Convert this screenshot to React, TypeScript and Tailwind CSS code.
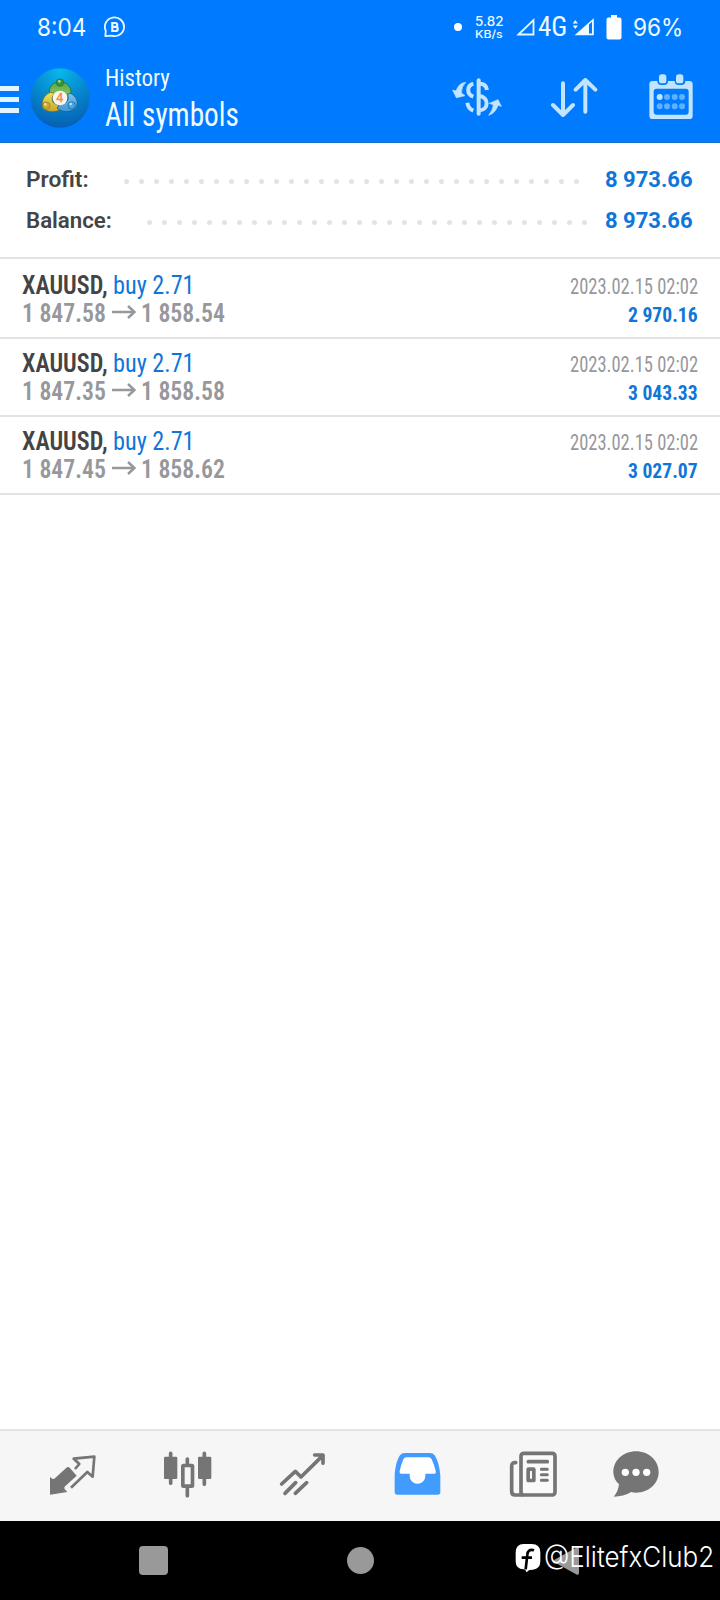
import { useLayoutEffect, useRef, useState } from "react";
import type { ReactNode } from "react";

const condensed = "font-['Roboto_Condensed','Roboto',sans-serif] font-stretch-condensed";
const status = "font-['Inter','Roboto',sans-serif]";

const deals = [
  { open: "1 847.58", close: "1 858.54", profit: "2 970.16" },
  { open: "1 847.35", close: "1 858.58", profit: "3 043.33" },
  { open: "1 847.45", close: "1 858.62", profit: "3 027.07" },
];

// One line of text squeezed horizontally to the given width
function Fit(props: { width: number; className?: string; children: ReactNode }) {
  const ref = useRef<HTMLSpanElement>(null);
  const [scale, setScale] = useState(1);

  useLayoutEffect(() => {
    if (ref.current) setScale(props.width / ref.current.offsetWidth);
  }, [props.width]);

  return (
    <span className={`block shrink-0 ${props.className ?? ""}`} style={{ width: props.width }}>
      <span
        ref={ref}
        className="inline-block origin-left whitespace-nowrap align-top"
        style={{ transform: `scaleX(${scale})` }}
      >
        {props.children}
      </span>
    </span>
  );
}

function BusinessIcon() {
  return (
    <svg viewBox="0 0 22 22" fill="none" className="ml-[18px] h-[22px] w-[22px] shrink-0">
      <path stroke="#e8f6ff" strokeWidth="1.8" strokeLinejoin="round" d="M1.300 20.200 1.800 14.800A9.600 9.400 0 1 1 7.500 19.700Z" />
      <path stroke="#e8f6ff" strokeWidth="2.2" d="M8.3 7h3a1.9 1.9 0 0 1 0 3.9h-3zM8.3 10.9h3.4a2 2 0 0 1 0 4.1H8.3z" />
    </svg>
  );
}

function StatusBar() {
  return (
    <div className={`flex h-[54px] items-center text-[#eefaff] ${status}`}>
      <Fit width={49} className="ml-[37px] pt-px text-[24px] leading-[54px]">8:04</Fit>
      <BusinessIcon />
      <span className="ml-[328px] h-2 w-2 shrink-0 rounded-full bg-white" />
      <div className="ml-[13px] w-[28px] shrink-0 pt-px text-[12.5px] font-medium leading-[12px]">
        <Fit width={28}>5.82</Fit>
        <Fit width={28} className="text-[11px]">KB/s</Fit>
      </div>
      <svg viewBox="0 0 20 20" className="ml-[13px] h-5 w-5 shrink-0">
        <path d="M2.5 17.5 17.5 3v14.5Z" fill="none" stroke="#e8f6ff" strokeWidth="1.8" />
      </svg>
      <Fit width={29} className={`ml-[2px] text-[27px] leading-[54px] ${condensed}`}>4G</Fit>
      <svg viewBox="0 0 23 20" className="ml-[5px] h-5 w-[23px] shrink-0">
        <path d="m3.3 3 2.6 3.6H.7ZM3.3 12 .7 8.4h5.2Z" fill="#eefaff" />
        <path d="M2.5 18.3 21.8 1.3v17Z" fill="#eefaff" />
        <path d="M17 7.5 20 4.8v11.8h-3Z" fill="#007aff" />
      </svg>
      <svg viewBox="0 0 16 25" className="ml-[11px] h-[25px] w-4 shrink-0">
        <path d="M5 0h6v2.5h2.5a2 2 0 0 1 2 2v18a2 2 0 0 1-2 2h-11a2 2 0 0 1-2-2v-18a2 2 0 0 1 2-2H5Z" fill="#fff" />
      </svg>
      <Fit width={50} className="ml-[11px] pt-px text-[24px] leading-[54px]">96%</Fit>
    </div>
  );
}

function Avatar() {
  return (
    <svg viewBox="0 0 180 180" className="ml-[11px] mt-[14px] h-[60px] w-[60px] shrink-0">
      <defs>
        <radialGradient id="disc" cx="50%" cy="5%" r="95%">
          <stop offset="0" stopColor="#08b8ea" />
          <stop offset="0.55" stopColor="#0684cb" />
          <stop offset="1" stopColor="#0560b4" />
        </radialGradient>
        <linearGradient id="green" x1="0" y1="0" x2="0" y2="1">
          <stop offset="0" stopColor="#5aa845" />
          <stop offset="1" stopColor="#8fca6a" />
        </linearGradient>
        <linearGradient id="gold" x1="0" y1="0" x2="0" y2="1">
          <stop offset="0" stopColor="#ece05a" />
          <stop offset="1" stopColor="#c9a52b" />
        </linearGradient>
        <linearGradient id="sky" x1="0" y1="0" x2="0" y2="1">
          <stop offset="0" stopColor="#7cc4ee" />
          <stop offset="1" stopColor="#3c95d6" />
        </linearGradient>
      </defs>
      <circle cx="90" cy="90" r="89" fill="url(#disc)" />
      <path d="M60 82C54 58 66 42 90 42s38 18 31 44l-15 4c-2-18-30-18-32 0Z" fill="url(#green)" stroke="#1f6b3b" strokeWidth="2.500" />
      <path d="M62 73c-20 6-29 28-24 47 14 14 40 14 54 4l-8-15c-20 0-22-20-10-33Z" fill="url(#gold)" stroke="#6a7030" strokeWidth="2.500" />
      <path d="M121 76c18 8 25 26 18 42-16 18-44 16-58 2l10-14c18 4 28-10 22-28Z" fill="url(#sky)" stroke="#176099" strokeWidth="2.500" />
      <circle cx="90" cy="44" r="11" fill="#3c9440" stroke="#1f6b3b" strokeWidth="2" />
      <circle cx="49" cy="113" r="11" fill="#cda92e" stroke="#857a2a" strokeWidth="2" />
      <circle cx="125" cy="112" r="11" fill="#4ba5e2" stroke="#176099" strokeWidth="2" />
      <circle cx="88" cy="40" r="4" fill="#a5dc8c" />
      <circle cx="46" cy="109" r="4" fill="#f4e68a" />
      <circle cx="122" cy="108" r="4" fill="#b8e4fa" />
      <circle cx="90" cy="90" r="22" fill="#fbf4ee" />
      <text x="89" y="103" textAnchor="middle" fontSize="37" fill="#f08a45" stroke="#f08a45" className="font-['Roboto',sans-serif]">4</text>
    </svg>
  );
}

function CurrencyIcon() {
  return (
    <svg viewBox="0 0 150 120" fill="none" className="mt-[23px] h-[40px] w-[50px] shrink-0">
      <path d="M2 39 12 42Q20 18 41 16 28 30 28 48L39 56 13 62Z" fill="#c2e4ff" stroke="#c2e4ff" strokeWidth="2" strokeLinejoin="round" />
      <path d="M148 88 138 85Q131 108 110 115 123 98 124 83L112 79 138 68Z" fill="#c2e4ff" stroke="#c2e4ff" strokeWidth="2" strokeLinejoin="round" />
      <g stroke="#c2e4ff" strokeWidth="12">
        <path d="M80 10v100" strokeLinecap="round" />
        <path d="M64 20C44 26 43 52 64 59M46 77c2 14 8 20 18 24" />
        <path d="M84 20c12 0 19 6 21 19M84 57c27 5 26 40 0 43" />
      </g>
    </svg>
  );
}

function SortIcon() {
  return (
    <svg viewBox="0 0 144 120" fill="none" className="ml-[48px] mt-[23px] h-[40px] w-[48px] shrink-0">
      <g stroke="#c2e4ff" strokeWidth="12" strokeLinecap="round" strokeLinejoin="round">
        <path d="M39 19v95M9 84l30 30 30-30" />
        <path d="M106 104V9M77 38l29-29 30 29" />
      </g>
    </svg>
  );
}

function CalendarIcon() {
  return (
    <svg viewBox="0 0 132 141" className="ml-[51px] mt-[19px] h-[47px] w-[44px] shrink-0">
      <rect x="1" y="24" width="130" height="114" rx="10" fill="#c2e4ff" />
      <rect x="14" y="47" width="105" height="78" rx="9" fill="#007aff" />
      <rect x="25" y="0" width="32" height="36" rx="12" fill="#007aff" />
      <rect x="77" y="0" width="32" height="36" rx="12" fill="#007aff" />
      <rect x="30" y="4" width="22" height="27" rx="8" fill="#c2e4ff" />
      <rect x="81" y="4" width="22" height="27" rx="8" fill="#c2e4ff" />
      {[32, 54, 77, 99].map((x) => (
        <g key={x}>
          <circle cx={x} cy="72" r="9" fill={x === 32 ? "#c2e4ff" : "#5fb1ff"} />
          <circle cx={x} cy="100" r="9" fill="#5fb1ff" />
        </g>
      ))}
    </svg>
  );
}

function AppBar() {
  return (
    <div className="flex h-[89px] border-b border-[#1b70c8] text-[#f0fbff]">
      <div className="flex w-[19px] shrink-0 flex-col gap-[6px] pt-[32px]">
        <span className="h-[5px] bg-[#e2f5ff]" />
        <span className="h-[5px] bg-[#e2f5ff]" />
        <span className="h-[5px] bg-[#e2f5ff]" />
      </div>
      <Avatar />
      <div className={`ml-[15px] w-[347px] pt-[10px] ${condensed}`}>
        <Fit width={65} className="text-[24px] leading-[28px]">History</Fit>
        <Fit width={134} className="mt-[4px] text-[33px] leading-[38px]">All symbols</Fit>
      </div>
      <CurrencyIcon />
      <SortIcon />
      <CalendarIcon />
    </div>
  );
}

function SummaryRow(props: { label: string; labelWidth: number; dots: number; value: string }) {
  return (
    <div className="flex h-[41px] items-center pl-[26px] font-['Roboto',sans-serif] text-[22px] font-semibold leading-[41px]">
      <Fit width={props.labelWidth} className="text-[#444]">{props.label}</Fit>
      <div className="ml-[35px] flex gap-[10px] pt-[3px]">
        {Array.from({ length: props.dots }, (_, i) => (
          <span key={i} className="h-[5px] w-[5px] rounded-full bg-[#e3e3e3]" />
        ))}
      </div>
      <Fit width={88} className="ml-auto mr-[27px] font-bold text-[#0f76d9]">{props.value}</Fit>
    </div>
  );
}

function DealRow(props: { open: string; close: string; profit: string }) {
  return (
    <div className={`flex h-[78px] justify-between border-b-2 border-[#e3e3e3] pl-[22px] pr-[22px] pt-[10px] ${condensed}`}>
      <div className="text-[26px] leading-[28px]">
        <div className="flex">
          <Fit width={86} className="font-semibold text-[#444]">XAUUSD,</Fit>
          <Fit width={82} className="ml-[5px] text-[#0f76d9]">buy 2.71</Fit>
        </div>
        <div className="flex font-semibold text-[#97989b]">
          <Fit width={84}>{props.open}</Fit>
          <svg viewBox="0 0 24 14" fill="none" className="ml-[6px] mt-[6px] h-[14px] w-6 shrink-0">
            <path d="M0 7h23M16 1l6.500 6-6.500 6" stroke="#97989b" strokeWidth="2.500" />
          </svg>
          <Fit width={84} className="ml-[5px]">{props.close}</Fit>
        </div>
      </div>
      <div className="flex flex-col items-end pt-[2px]">
        <Fit width={128} className="text-[22px] leading-[28px] text-[#97989b]">2023.02.15 02:02</Fit>
        <Fit width={70} className="text-[21px] font-bold leading-[28px] text-[#0f76d9]">{props.profit}</Fit>
      </div>
    </div>
  );
}

function TabBar() {
  return (
    <div className="flex h-[92px] border-t-2 border-[#e3e3e3] bg-[#f6f6f6] pl-[48px] pt-5">
      <svg viewBox="0 0 144 144" className="h-12 w-12" fill="none">
        <path d="M6 131V78l8 6 5-1 38-34q4-3 8 1l21 24-37 34 1 7 8 8Z" fill="#757575" />
        <path d="M81 54 94 39 77 23 139 17 134 77 118 63 69 110" stroke="#757575" strokeWidth="8" strokeLinejoin="round" />
      </svg>
      <svg viewBox="0 0 147 144" className="ml-[67px] h-12 w-[49px]" fill="none">
        <path d="M23 7v90M73 24v110M124 7v93" stroke="#757575" strokeWidth="11" strokeLinecap="round" />
        <rect x="3" y="17" width="40" height="67" rx="4" fill="#757575" />
        <rect x="105" y="17" width="40" height="67" rx="4" fill="#757575" />
        <rect x="59.500" y="43.500" width="29" height="62" rx="2" fill="#f6f6f6" stroke="#757575" strokeWidth="11" />
      </svg>
      <svg viewBox="0 0 144 144" className="ml-[66px] h-12 w-12" fill="none">
        <g stroke="#757575" strokeWidth="11" strokeLinecap="round" strokeLinejoin="round">
          <path d="m11 99 41-38 17 17 65-64M110 12h25v25" />
          <path d="m21 127 32-32M52 127l34-32" />
        </g>
      </svg>
      <svg viewBox="0 0 144 144" className="ml-[68px] h-12 w-12">
        <path d="M2 75C3 48 10 24 18 13q5-7 14-7h76q9 0 14 7c9 14 16 38 17 62v48q0 8-8 8H10q-8 0-8-8Z" fill="#429bff" />
        <path d="M37 19h67q6 0 9 6 8 17 12 35 2 8-4 8H94v7a23 23 0 0 1-47 0v-7H22q-6 0-5-8 4-18 11-35 3-6 9-6Z" fill="#fff" />
      </svg>
      <svg viewBox="0 0 144 144" className="ml-[67px] h-12 w-12" fill="none">
        <g stroke="#757575" strokeWidth="11">
          <path d="M20 35Q8 34 8 45v76q0 11 10 11h22" fill="#fafafa" strokeLinecap="round" />
          <rect x="36" y="7" width="102" height="125" rx="8" fill="#fafafa" />
          <path d="M58 32h57" strokeLinecap="round" />
          <path d="M97 55h18M97 71h18M97 88h18" strokeWidth="9" strokeLinecap="round" />
          <rect x="57.500" y="54.500" width="17" height="34" rx="1" />
        </g>
      </svg>
      <svg viewBox="0 0 144 144" className="ml-[56px] h-12 w-12">
        <path d="M69 1c38 0 68 27 68 62s-30 62-68 62q-7 0-14-2-24 14-53 14 13-13 16-37Q1 84 1 63C1 28 31 1 69 1Z" fill="#757575" />
        <g fill="#fff">
          <circle cx="37" cy="64" r="11" />
          <circle cx="69" cy="64" r="11" />
          <circle cx="101" cy="64" r="11" />
        </g>
      </svg>
    </div>
  );
}

function SystemNav() {
  return (
    <div className="relative flex h-[79px] items-center bg-black">
      <span className="ml-[139px] h-[29px] w-[29px] rounded-[4px] bg-[#999]" />
      <span className="ml-[179px] h-[27px] w-[27px] rounded-full bg-[#999]" />
      <svg viewBox="0 0 28 30" className="ml-[178px] h-[30px] w-7">
        <path d="M2 14 24.500 1.500Q27 .500 27 3v24q0 2.500-2.500 1.500L2 16Q.500 15 2 14Z" fill="#999" />
      </svg>
      {/* page handle drawn over the back button */}
      <div className={`absolute left-[515px] top-[19px] flex items-center text-white ${status}`}>
        <svg viewBox="0 0 78 90" className="h-[30px] w-[26px] shrink-0">
          <path d="M26 6h24q26 0 26 26v26q0 22-22 25l-11 1-9 7-3-8-5-1Q2 81 2 58V32Q2 6 26 6Z" fill="#fff" />
          <path d="M57 25c-13-4-19 2-20 13l-5 44M20 47h31" fill="none" stroke="#000" strokeWidth="8" />
        </svg>
        <Fit width={170} className="ml-[3px] text-[28px] font-light leading-[34px]">@ElitefxClub2</Fit>
      </div>
    </div>
  );
}

export default function App() {
  return (
    <div className="flex h-[1600px] w-[720px] flex-col overflow-hidden bg-white">
      <header className="h-[143px] bg-[#007aff]">
        <StatusBar />
        <AppBar />
      </header>
      <section className="h-[116px] border-b-2 border-[#e3e3e3] pt-[16px]">
        <SummaryRow label="Profit:" labelWidth={63} dots={31} value="8 973.66" />
        <SummaryRow label="Balance:" labelWidth={86} dots={30} value="8 973.66" />
      </section>
      <main className="flex-1 pt-[2px]">
        {deals.map((deal) => (
          <DealRow key={deal.open} {...deal} />
        ))}
      </main>
      <TabBar />
      <SystemNav />
    </div>
  );
}
